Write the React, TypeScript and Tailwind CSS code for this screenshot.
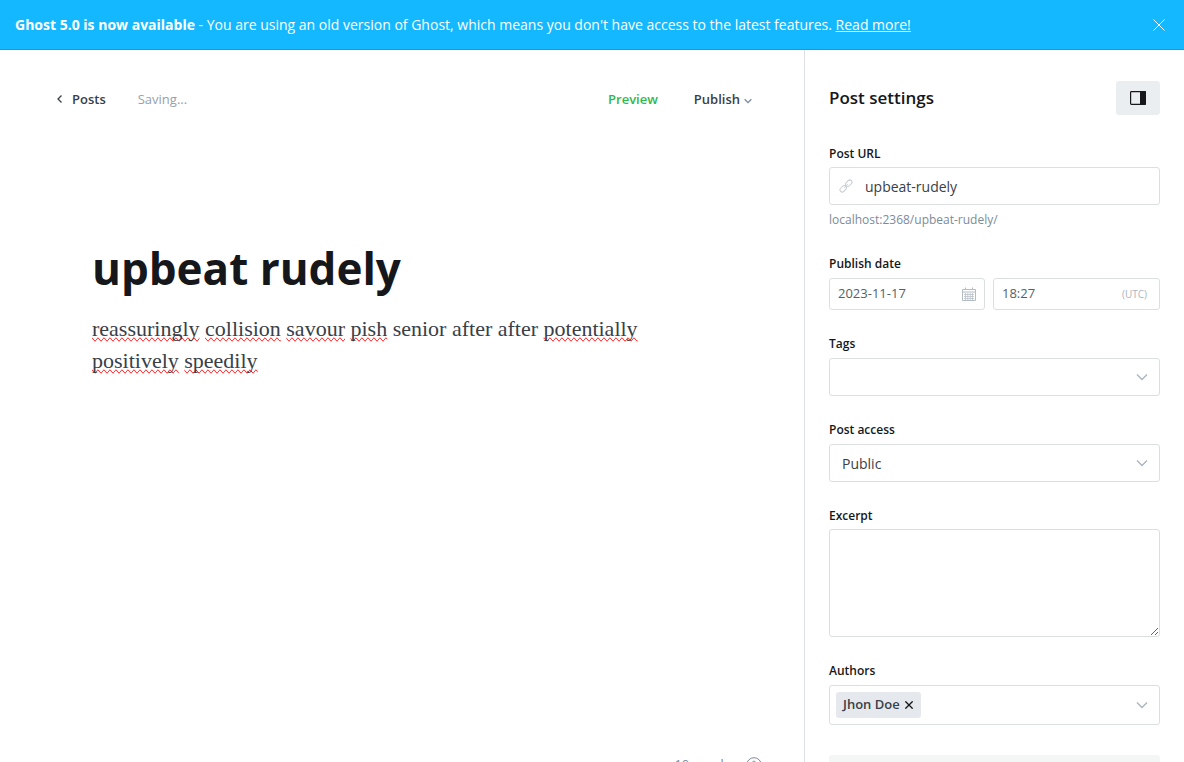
import type { ReactNode } from 'react';

const words: { text: string; misspelled: boolean }[] = [
  { text: 'reassuringly', misspelled: true },
  { text: 'collision', misspelled: true },
  { text: 'savour', misspelled: true },
  { text: 'pish', misspelled: true },
  { text: 'senior', misspelled: false },
  { text: 'after', misspelled: false },
  { text: 'after', misspelled: false },
  { text: 'potentially', misspelled: true },
  { text: 'positively', misspelled: true },
  { text: 'speedily', misspelled: true },
];

function Chevron({ className }: { className: string }) {
  return (
    <svg className={className} viewBox="0 0 12 8" fill="none" stroke="currentColor" aria-hidden="true">
      <path d="M1 1.5 6 6.5 11 1.5" />
    </svg>
  );
}

function CloseIcon({ className }: { className: string }) {
  return (
    <svg className={className} viewBox="0 0 12 12" fill="none" stroke="currentColor" aria-hidden="true">
      <path d="M.5.5l11 11M11.5.5l-11 11" />
    </svg>
  );
}

function LinkIcon() {
  return (
    <svg className="h-3.5 w-3.5 text-[#c5cbd0]" viewBox="0 0 14 14" fill="none" stroke="currentColor" aria-hidden="true">
      <rect x="-3.6" y="-2.2" width="7.2" height="4.4" rx="2.2" transform="translate(9.8 4.2) rotate(-45)" />
      <rect x="-3.6" y="-2.2" width="7.2" height="4.4" rx="2.2" transform="translate(4.2 9.8) rotate(-45)" />
      <path d="M5.2 8.8 8.8 5.2" />
    </svg>
  );
}

function CalendarIcon() {
  return (
    <svg className="h-3.5 w-3.5 text-[#b3bcc4]" viewBox="0 0 14 14" fill="none" stroke="currentColor" aria-hidden="true">
      <path d="M.5 2.5h13v11H.5zM.5 5h13" />
      <path d="M3.5.5v2M10.5.5v2" />
      <path d="M3.5 6v7M5.8 6v7M8.2 6v7M10.5 6v7M2 7.5h10M2 9.5h10M2 11.5h10" strokeWidth=".7" />
    </svg>
  );
}

function Label({ htmlFor, children }: { htmlFor: string; children: ReactNode }) {
  return (
    <label htmlFor={htmlFor} className="block text-[12px] leading-4 font-semibold text-[#15171a]">
      {children}
    </label>
  );
}

const box = 'rounded-[3px] border border-[#dcdfe0] bg-white';

export default function App() {
  return (
    <div className="flex h-screen flex-col overflow-hidden bg-white font-['Open_Sans','Noto_Sans',sans-serif] text-[#394047]">
      <div className="flex h-[50px] shrink-0 items-center justify-between border-b border-[#0f9ddc] bg-[#14b8ff] pr-[19px] pl-[15px] text-[14px] leading-5 text-white">
        <p className="whitespace-nowrap">
          <strong className="font-bold">Ghost 5.0 is now available</strong> - You are using an old version of Ghost, which
          means you don't have access to the latest features.{' '}
          <a href="#upgrade" className="underline">
            Read more!
          </a>
        </p>
        <button type="button" aria-label="Close notification">
          <CloseIcon className="h-3 w-3" />
        </button>
      </div>

      <div className="flex h-[calc(100vh-25px)] shrink-0">
        <main className="flex min-w-0 flex-1 flex-col">
          <header className="flex items-center justify-between pt-[39px] pr-[52px] pl-14 text-[13px] leading-5">
            <div className="flex items-center gap-8">
              <a href="#posts" className="flex items-center gap-2 font-semibold">
                <svg className="h-2 w-2" viewBox="0 0 8 8" fill="none" stroke="currentColor" strokeWidth="1.3" aria-hidden="true">
                  <path d="M5.5.5 2 4l3.5 3.5" />
                </svg>
                Posts
              </a>
              <span className="text-[#95a1ad]">Saving...</span>
            </div>
            <div className="flex items-center gap-9 font-semibold">
              <button type="button" className="text-[#30b84a]">
                Preview
              </button>
              <button type="button" className="flex items-center gap-1">
                Publish
                <Chevron className="mt-1 h-1.5 w-2 stroke-2 text-[#7c8b9a]" />
              </button>
            </div>
          </header>

          <article className="mx-auto w-full max-w-[620px] flex-1 pt-[129px]">
            <h1 className="text-[44px] leading-[60px] font-bold text-[#15171a]">upbeat rudely</h1>
            <p className="mt-[15px] font-['Liberation_Serif',serif] text-[22px] leading-8">
              {words.map((word, i) => (
                <span key={i}>
                  {word.misspelled ? (
                    <span className="[text-decoration-line:spelling-error]">{word.text}</span>
                  ) : (
                    word.text
                  )}{' '}
                </span>
              ))}
            </p>
          </article>

          <footer className="flex h-11 shrink-0 items-center justify-end gap-4 pr-[42px] text-[13px] text-[#7c8b9a]">
            <span>10 words</span>
            <a href="#help" aria-label="Editor help">
              <svg className="h-4 w-4" viewBox="0 0 16 16" fill="none" stroke="currentColor" aria-hidden="true">
                <circle cx="8" cy="8" r="7.3" />
                <path d="M6 6.3C6 5 6.9 4.2 8 4.2s2 .8 2 1.9c0 1.4-2 1.5-2 3M8 10.8v1.2" />
              </svg>
            </a>
          </footer>
        </main>

        <aside className="w-[380px] shrink-0 border-l border-[#dde1e5] px-6 pt-[31px]">
          <div className="flex items-center justify-between">
            <h2 className="text-[17px] leading-6 font-semibold text-[#15171a]">Post settings</h2>
            <button
              type="button"
              aria-label="Toggle settings panel"
              className="flex h-[34px] w-11 items-center justify-center rounded-[3px] bg-[#ebeef0]"
            >
              <svg className="h-3.5 w-4 text-[#15171a]" viewBox="0 0 16 14" aria-hidden="true">
                <rect x=".6" y=".6" width="14.8" height="12.8" rx=".8" fill="none" stroke="currentColor" strokeWidth="1.2" />
                <path d="M10 0h5a1 1 0 0 1 1 1v12a1 1 0 0 1-1 1h-5z" fill="currentColor" />
              </svg>
            </button>
          </div>

          <form className="mt-[31px] flex flex-col gap-[26px]">
            <div>
              <Label htmlFor="url">Post URL</Label>
              <div className={`${box} mt-[5px] flex h-[38px] items-center gap-3 px-[9px]`}>
                <LinkIcon />
                <input id="url" defaultValue="upbeat-rudely" className="min-w-0 flex-1 text-[14px] outline-none" />
              </div>
              <p className="mt-[7px] text-[12px] leading-4 text-[#7c8b9a]">localhost:2368/upbeat-rudely/</p>
            </div>

            <div className="mt-0.5">
              <Label htmlFor="date">Publish date</Label>
              <div className="mt-1.5 flex gap-2 text-[13px] text-[#545f69]">
                <div className={`${box} flex h-8 w-[156px] items-center px-2`}>
                  <input id="date" defaultValue="2023-11-17" className="min-w-0 flex-1 outline-none" />
                  <CalendarIcon />
                </div>
                <div className={`${box} flex h-8 min-w-0 flex-1 items-center pr-3 pl-2`}>
                  <input aria-label="Publish time" defaultValue="18:27" className="min-w-0 flex-1 outline-none" />
                  <span className="text-[10px] text-[#abb4be]">(UTC)</span>
                </div>
              </div>
            </div>

            <div>
              <Label htmlFor="tags">Tags</Label>
              <div className={`${box} mt-1.5 flex h-[38px] items-center pr-[11px] pl-3`}>
                <input id="tags" className="min-w-0 flex-1 outline-none" />
                <Chevron className="h-2 w-3 stroke-[1.4] text-[#abb4be]" />
              </div>
            </div>

            <div>
              <Label htmlFor="access">Post access</Label>
              <div className={`${box} mt-1.5 grid h-[38px] items-center`}>
                <select
                  id="access"
                  defaultValue="Public"
                  className="col-start-1 row-start-1 h-full w-full appearance-none pr-8 pl-3 text-[14px] outline-none"
                >
                  <option>Public</option>
                  <option>Members only</option>
                  <option>Paid-members only</option>
                </select>
                <Chevron className="pointer-events-none col-start-1 row-start-1 mr-[11px] h-2 w-3 justify-self-end stroke-[1.4] text-[#abb4be]" />
              </div>
            </div>

            <div>
              <Label htmlFor="excerpt">Excerpt</Label>
              <textarea id="excerpt" className={`${box} mt-[5px] block h-[108px] w-full resize p-3 text-[14px] outline-none`} />
            </div>

            <div>
              <Label htmlFor="authors">Authors</Label>
              <div className={`${box} mt-1.5 flex h-10 items-center gap-2 pr-[11px] pl-1.5`}>
                <span className="flex h-[26px] items-center gap-1 rounded-[3px] bg-[#e5e9ed] px-[7px] text-[13px] font-semibold">
                  Jhon Doe
                  <button type="button" aria-label="Remove Jhon Doe">
                    <CloseIcon className="h-2.5 w-2.5 stroke-2 p-px text-[#15171a]" />
                  </button>
                </span>
                <input id="authors" className="min-w-0 flex-1 outline-none" />
                <Chevron className="h-2 w-3 stroke-[1.4] text-[#abb4be]" />
              </div>
            </div>

            <div className="mt-1 h-9 rounded-[3px] bg-[#f4f6f6]" />
          </form>
        </aside>
      </div>
    </div>
  );
}
